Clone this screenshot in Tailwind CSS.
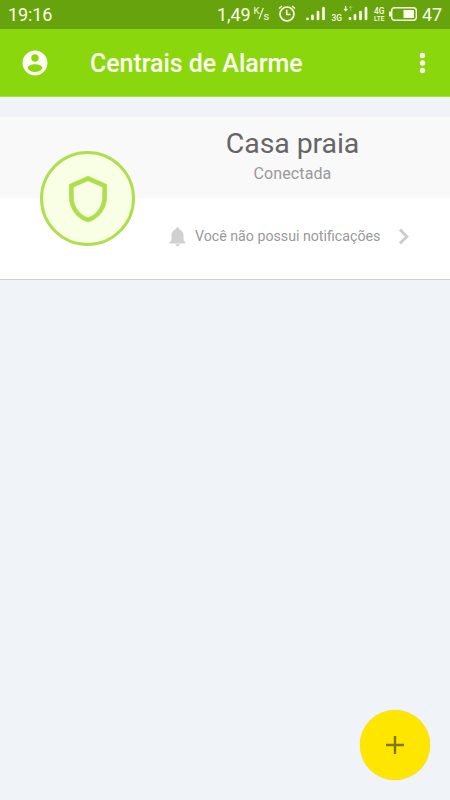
<!DOCTYPE html>
<html lang="pt-BR">
<head>
<meta charset="utf-8">
<title>Centrais de Alarme</title>
<script src="https://cdn.jsdelivr.net/npm/@tailwindcss/browser@4"></script>
</head>
<body class="font-[Roboto,sans-serif]">
<div class="relative flex h-[800px] w-[450px] flex-col overflow-hidden bg-[#f0f4f8] whitespace-nowrap">
  <div class="flex h-[29px] shrink-0 items-center bg-[#67a30c] text-[#fcffe8]">
    <span class="ml-2 w-[209px] text-[18px] leading-[29px] tracking-[-0.1px]">19:16</span>
    <span class="w-[36px] text-[18px] leading-[29px] tracking-[-0.1px]">1,49</span>
    <svg class="h-[29px] w-[169px]" viewBox="253 0 169 29" fill="none" stroke="#fcffe8" font-family="Roboto, sans-serif">
      <g fill="#fcffe8" stroke="none">
        <text x="253.5" y="14" font-size="9.5">K</text>
        <text x="263.5" y="20" font-size="11">s</text>
        <text x="331.5" y="21" font-size="8.5" font-weight="500" textLength="10.5" lengthAdjust="spacingAndGlyphs">3G</text>
        <text x="374" y="13.5" font-size="8.5" font-weight="500" textLength="10.5" lengthAdjust="spacingAndGlyphs">4G</text>
        <text x="374" y="21" font-size="8" font-weight="500" textLength="10.5" lengthAdjust="spacingAndGlyphs">LTE</text>
        <rect x="389" y="11.5" width="2" height="5"/>
        <rect x="403.5" y="10" width="10.5" height="8"/>
      </g>
      <path d="M259 19l4.300-11" stroke-width="1.100"/>
      <circle cx="287" cy="14" r="7" stroke-width="1.700"/>
      <path d="M286.700 9.800v4.700h3.800" stroke-width="1.500"/>
      <path d="M279 8.500l3-2.500M292 6l3 2.500" stroke-width="1.400"/>
      <g stroke-width="2.700" stroke-linecap="round">
        <path d="M307.500 18.800v.2M312.500 15.800v3.200M318 12.200v6.800M323.500 8.200v10.800"/>
        <path d="M350 18.300v.7M355 15.300v3.700M360.500 12v7M366 8.200v10.800"/>
      </g>
      <path d="M345.700 6v4.500M344 9l1.700 1.700 1.700-1.700" stroke-width="1.100"/>
      <path d="M350.700 10.500v-4M349.200 7.800l1.500-1.500 1.500 1.500" stroke-width="1" opacity=".4"/>
      <rect x="391.700" y="7.700" width="24.600" height="12.600" rx="3" stroke-width="1.400"/>
    </svg>
    <span class="text-[18px] leading-[29px]">47</span>
  </div>
  <header class="flex h-[68px] shrink-0 items-center border-b border-[#a5dc4b] bg-[#8ad70d] text-[#fdfff0]">
    <svg class="ml-5 size-[30px]" viewBox="0 0 24 24" fill="currentColor"><path d="M12 2C6.480 2 2 6.480 2 12s4.480 10 10 10 10-4.480 10-10S17.520 2 12 2zm0 3c1.660 0 3 1.340 3 3s-1.340 3-3 3-3-1.340-3-3 1.340-3 3-3zm0 14.200c-2.500 0-4.710-1.280-6-3.220.030-1.990 4-3.080 6-3.080 1.990 0 5.970 1.090 6 3.080-1.290 1.940-3.500 3.220-6 3.220z"/></svg>
    <h1 class="ml-10 flex-1 pt-[2px] text-[25px] font-medium tracking-[-0.05px]">Centrais de Alarme</h1>
    <svg class="mr-[20px] h-[22px] w-[15px]" viewBox="0 0 15 22" fill="currentColor"><circle cx="7.500" cy="3.500" r="2.700"/><circle cx="7.500" cy="11" r="2.700"/><circle cx="7.500" cy="18.500" r="2.700"/></svg>
  </header>
  <main class="relative mt-5 h-[163px] shrink-0 border-b border-[#cdd0d2] bg-white">
    <section class="flex h-[81px] flex-col items-center bg-[#f9f9f9] pl-[135px]">
      <h2 class="mt-[9px] text-[28.500px] leading-9 tracking-[-0.1px] text-[#666]">Casa praia</h2>
      <p class="mt-[2px] text-[16px] leading-5 tracking-[0.1px] text-[#999]">Conectada</p>
    </section>
    <section class="flex h-[77px] items-center">
      <svg class="ml-[166px] size-[23px]" viewBox="0 0 24 24" fill="#d0d0d0"><path d="M12 22c1.100 0 2-.9 2-2h-4c0 1.100.89 2 2 2zm6-6v-5c0-3.500-1.640-5.640-4.500-6.320V4c0-.83-.67-1.500-1.500-1.500s-1.500.67-1.500 1.500v.68C7.630 5.360 6 7.500 6 11v5l-2 2v1h16v-1l-2-2z" stroke="#d0d0d0" stroke-width=".5"/></svg>
      <span class="ml-1.5 w-[193px] pt-px text-[14.200px] text-[#999]">Você não possui notificações</span>
      <svg class="size-[31px]" viewBox="0 0 24 24" fill="#ccc" stroke="#ccc" stroke-width=".3"><path d="M10 6L8.590 7.410 13.170 12l-4.580 4.590L10 18l6-6z"/></svg>
    </section>
    <div class="absolute top-[34px] left-10 flex size-[95px] items-center justify-center rounded-full border-3 border-[#afdf50] bg-[#f9ffe4]">
      <svg class="size-[50px]" viewBox="0 0 24 24" fill="#acdf49" stroke="#acdf49" stroke-width=".2"><path d="M12 1L3 5v6c0 5.550 3.840 10.740 9 12 5.160-1.260 9-6.450 9-12V5l-9-4zm7 10c0 4.520-2.980 8.690-7 9.930-4.020-1.240-7-5.410-7-9.930V6.300l7-3.110 7 3.110V11z"/></svg>
    </div>
  </main>
  <button aria-label="Adicionar" class="absolute right-5 bottom-5 flex size-[70px] items-center justify-center rounded-full bg-[#ffe600] shadow-[0_0_1px_#dbcb3c]">
    <svg class="size-[18px]" viewBox="0 0 18 18" stroke="#827500" stroke-width="2.400"><path d="M9 0v18M0 9h18"/></svg>
  </button>
</div>
</body>
</html>
